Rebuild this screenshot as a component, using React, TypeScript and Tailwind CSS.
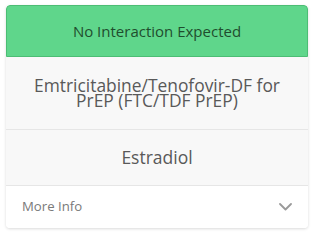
export default function App() {
  return (
    <div className="w-[314px] h-[234px] bg-white pt-[5px] px-[6px] font-['Open_Sans',sans-serif]">
      <div className="rounded-[4px] shadow-[0_1px_3px_rgba(0,0,0,0.15)] overflow-hidden">
        <div className="h-[52px] flex items-center justify-center bg-[#5fd68b] border border-[#4cbd74] rounded-t-[4px] text-[15px] text-[#1f4d2e]">
          No Interaction Expected
        </div>
        <div className="h-[73px] flex items-center justify-center bg-[#f8f8f8] border-b border-[#e6e6e6] text-center text-[17.4px] leading-[15px] text-[#595959] px-2">
          <div>
            Emtricitabine/Tenofovir-DF for
            <br />
            PrEP (FTC/TDF PrEP)
          </div>
        </div>
        <div className="h-[56px] flex items-center justify-center bg-[#f8f8f8] border-b border-[#e6e6e6] text-[17.5px] text-[#595959]">
          Estradiol
        </div>
        <div className="h-[42px] flex items-center justify-between bg-white pl-[16px] pr-[16px] text-[13.2px] text-[#7a7a7a]">
          <span>More Info</span>
          <svg width="13" height="8" viewBox="0 0 13 8" fill="none">
            <path d="M1 1 L6.5 6.5 L12 1" stroke="#9a9a9a" strokeWidth="1.8" strokeLinecap="round" strokeLinejoin="round" />
          </svg>
        </div>
      </div>
    </div>
  );
}
